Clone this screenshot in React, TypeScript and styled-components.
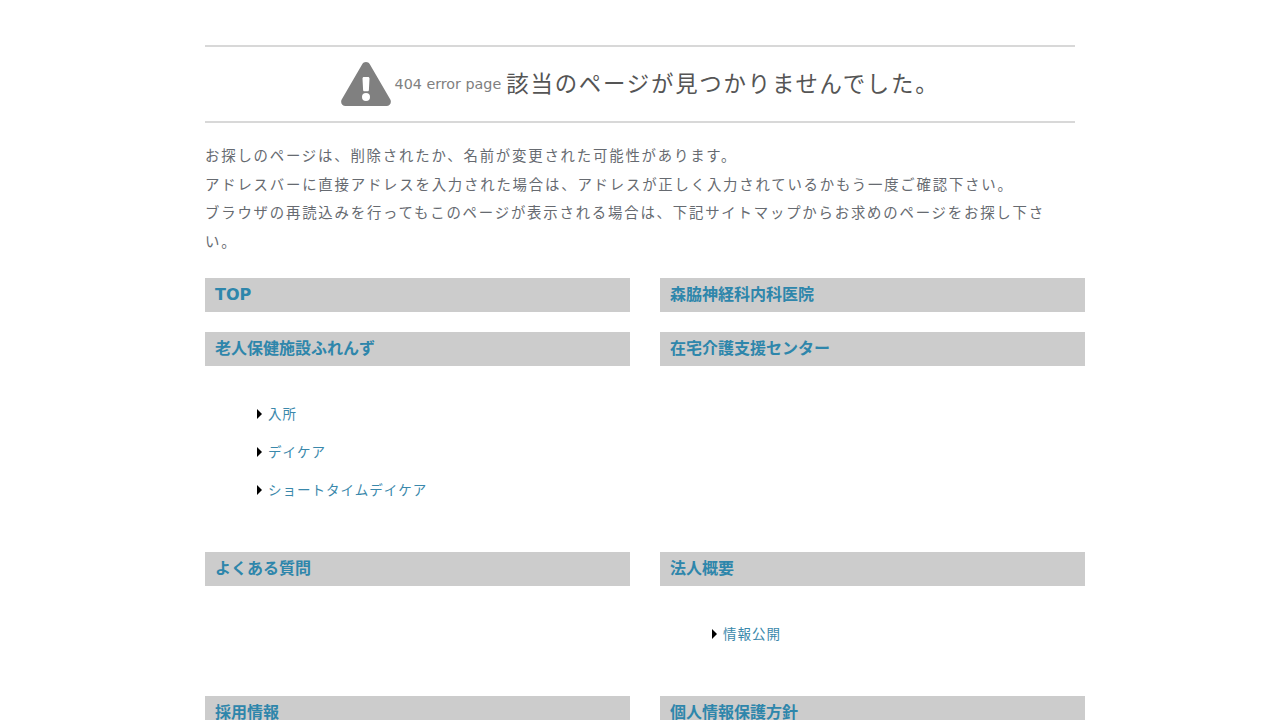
import styled, { createGlobalStyle } from "styled-components";

const Global = createGlobalStyle`
  html, body {
    margin: 0;
    padding: 0;
    background: #fff;
    overflow: hidden;
    height: 720px;
  }
  body {
    font-family: "DejaVu Sans", "Noto Sans CJK JP", sans-serif;
    color: #666a70;
  }
`;

const Page = styled.div`
  width: 870px;
  margin: 0 auto;
  padding-top: 45px;
`;

const Heading = styled.h1`
  margin: 0;
  height: 74px;
  border-top: 2px solid #d8d8d8;
  border-bottom: 2px solid #d8d8d8;
  display: flex;
  align-items: center;
  justify-content: center;
  font-weight: normal;
  font-size: 22.4px;
  letter-spacing: 1.8px;
  color: #555;
`;

const Small = styled.span`
  font-size: 14.3px;
  letter-spacing: 0;
  color: #808080;
  margin: 0 5px 0 4px;
`;

const HeadingText = styled.span`
  margin-bottom: 5px;
`;

const Message = styled.p`
  margin: 19px 0 0;
  width: 840px;
  font-size: 14.4px;
  line-height: 28.6px;
  letter-spacing: 1.8px;
`;

const Grid = styled.div`
  margin-top: 21.4px;
  width: 880px;
  display: grid;
  grid-template-columns: 425px 425px;
  column-gap: 30px;
`;

const Section = styled.div`
  margin-bottom: 20px;
`;

const Title = styled.a`
  display: block;
  height: 34px;
  background: #ccc;
  padding-left: 10px;
  color: #2e86ab;
  font-weight: bold;
  font-size: 16px;
  line-height: 33px;
`;

const SubList = styled.ul`
  list-style: none;
  margin: 0;
  padding: 29px 0 23px 52px;
`;

const SubItem = styled.li`
  display: flex;
  align-items: center;
  height: 38px;
  font-size: 13.5px;
  letter-spacing: 1px;
  line-height: 36px;
  color: #3a88ab;
  &::before {
    content: "";
    width: 0;
    height: 0;
    margin-right: 6px;
    border-left: 5px solid #000;
    border-top: 5px solid transparent;
    border-bottom: 5px solid transparent;
  }
`;

const Warning = () => (
  <svg width="50" height="44" viewBox="0 0 50 44" aria-hidden="true">
    <path
      fill="#808080"
      fillRule="evenodd"
      d="M25 0c1.600 0 3 .9 3.800 2.300L49.300 37.500c1.600 2.900-.4 6.500-3.800 6.500H4.500c-3.400 0-5.400-3.600-3.800-6.500L21.200 2.300C22 .9 23.400 0 25 0zM21.500 16.500l.6 11.500c0 .8.600 1.300 1.300 1.300h3.200c.7 0 1.300-.5 1.300-1.300l.6-11.500c0-.9-.6-1.500-1.400-1.500h-4.200c-.8 0-1.400.6-1.400 1.500zM25 31a4 4 0 1 0 0 8 4 4 0 0 0 0-8z"
    />
  </svg>
);

const sections = [
  { title: "TOP" },
  { title: "森脇神経科内科医院" },
  { title: "老人保健施設ふれんず", items: ["入所", "デイケア", "ショートタイムデイケア"] },
  { title: "在宅介護支援センター" },
  { title: "よくある質問" },
  { title: "法人概要", items: ["情報公開"] },
  { title: "採用情報" },
  { title: "個人情報保護方針" },
];

export default function App() {
  return (
    <Page>
      <Global />
      <Heading>
        <Warning />
        <Small>404 error page</Small>
        <HeadingText>該当のページが見つかりませんでした。</HeadingText>
      </Heading>
      <Message>
        お探しのページは、削除されたか、名前が変更された可能性があります。
        <br />
        アドレスバーに直接アドレスを入力された場合は、アドレスが正しく入力されているかもう一度ご確認下さい。
        <br />
        ブラウザの再読込みを行ってもこのページが表示される場合は、下記サイトマップからお求めのページをお探し下さい。
      </Message>
      <Grid>
        {sections.map((s) => (
          <Section key={s.title}>
            <Title>{s.title}</Title>
            {s.items && (
              <SubList>
                {s.items.map((item) => (
                  <SubItem key={item}>{item}</SubItem>
                ))}
              </SubList>
            )}
          </Section>
        ))}
      </Grid>
    </Page>
  );
}
